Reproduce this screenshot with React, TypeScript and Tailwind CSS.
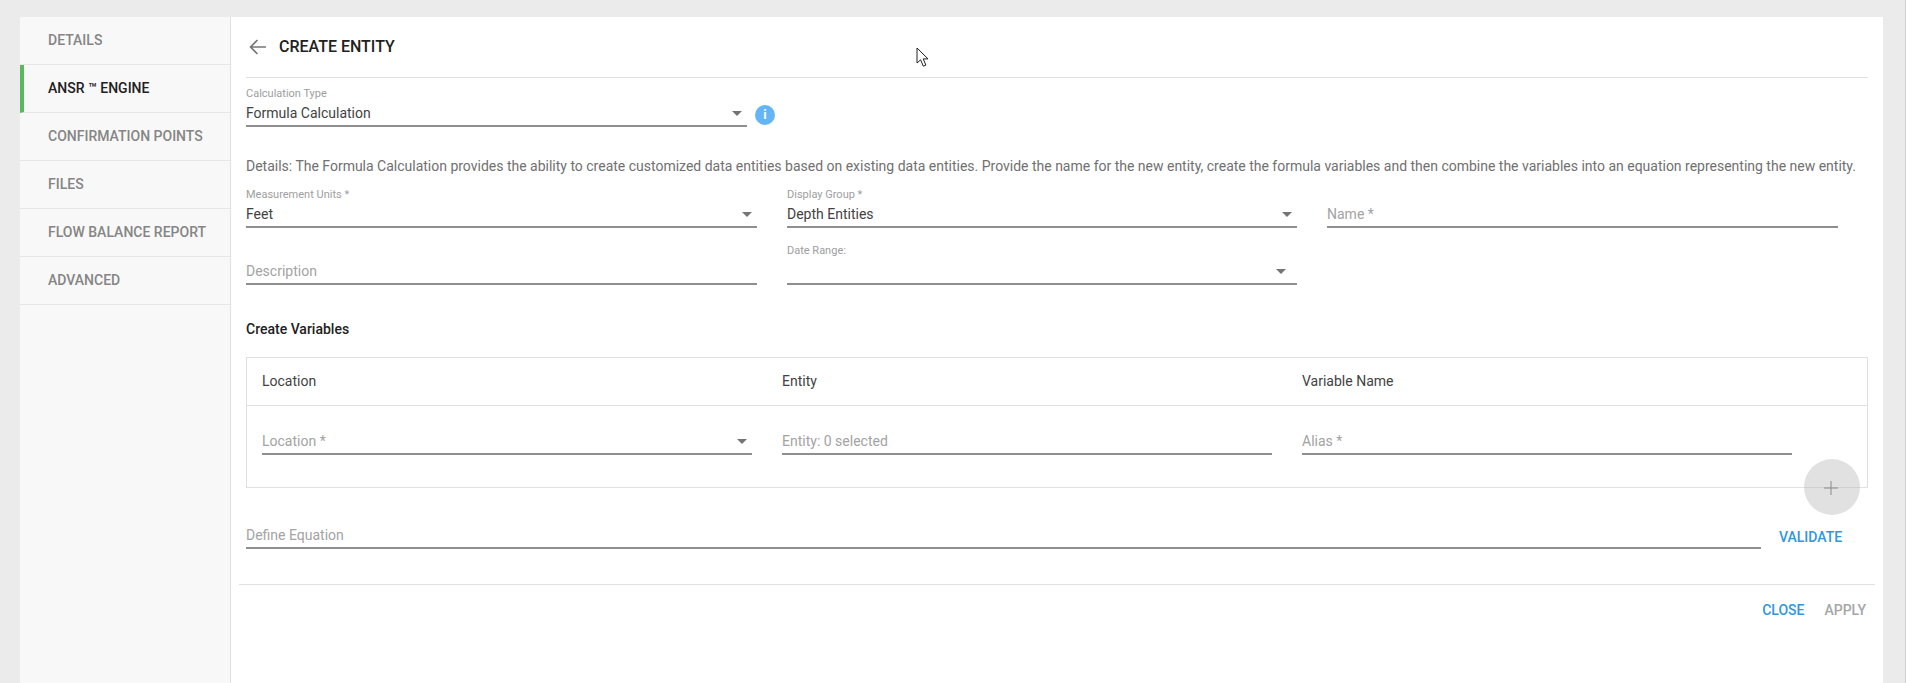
const navItems = ['DETAILS', 'ANSR ™ ENGINE', 'CONFIRMATION POINTS', 'FILES', 'FLOW BALANCE REPORT', 'ADVANCED'];

function Caret({ className }: { className?: string }) {
  return <span className={`h-0 w-0 border-x-[5px] border-t-[5px] border-x-transparent border-t-[#757575] ${className ?? 'mr-[5px]'}`} />;
}

// material style select / input with an underline
function Field({
  label,
  value,
  placeholder,
  select,
  className,
  labelClass,
  caretClass,
}: {
  label?: string;
  value?: string;
  placeholder?: string;
  select?: boolean;
  className?: string;
  labelClass?: string;
  caretClass?: string;
}) {
  return (
    <div className={className}>
      {label && <div className={`h-[14px] text-[11px] leading-[16px] text-[#9e9e9e] ${labelClass ?? ''}`}>{label}</div>}
      <div className={`flex items-center justify-between border-b-2 border-[#8f8f8f] ${label ? 'h-[27px] pt-[1px]' : 'h-[26px]'}`}>
        {value && <span className="text-[14px] text-[#424242]">{value}</span>}
        {placeholder && <span className="text-[14px] text-[#a3a3a3]">{placeholder}</span>}
        {!value && !placeholder && <span />}
        {select && <Caret className={caretClass} />}
      </div>
    </div>
  );
}

export default function App() {
  return (
    <div className="h-[683px] overflow-hidden border-r border-[#cfcfcf] bg-[#ebebeb] pt-[17px] pl-[20px] pr-[22px] font-['Roboto',sans-serif]">
      <div className="relative flex h-[666px] bg-white">
        {/* Sidebar */}
        <div className="w-[211px] shrink-0 border-r border-[#e0e0e0] bg-[#f8f8f8]">
          {navItems.map((item) => {
            const active = item.startsWith('ANSR');
            return (
              <div
                key={item}
                className={`flex h-[48px] items-center border-b border-[#e6e6e6] text-[14px] font-medium ${
                  active ? 'border-l-4 border-l-[#5cb85c] pl-[24px] text-[#212121]' : 'pl-[28px] text-[#858585]'
                }`}
              >
                {item}
              </div>
            );
          })}
        </div>

        {/* Main panel */}
        <div className="flex-1 px-[15px]">
          <div className="flex h-[61px] items-center gap-[12px] border-b border-[#e0e0e0] pl-[3px]">
            <svg width="18" height="18" viewBox="0 0 18 18" fill="none" stroke="#757575" strokeWidth="1.6">
              <path d="M17 9H1.5M8.5 2 1.5 9l7 7" />
            </svg>
            <span className="text-[16px] font-medium text-[#212121]">CREATE ENTITY</span>
          </div>

          <div className="mt-[8px] flex items-center">
            <Field label="Calculation Type" value="Formula Calculation" select className="w-[501px]" />
            <span className="mt-[16px] ml-[8px] flex h-[20px] w-[20px] items-center justify-center rounded-full bg-[#64b5f6] text-[13px] font-bold text-white">
              i
            </span>
          </div>

          <p className="mt-[29px] h-[20px] whitespace-nowrap text-[14px] leading-[20px] tracking-[-0.005px] text-[#707070]">
            Details: The Formula Calculation provides the ability to create customized data entities based on existing data entities. Provide the name for the new entity, create the formula variables and then combine the variables into an equation representing the new entity.
          </p>

          <div className="mt-[11px] flex items-end gap-[30px] pr-[30px]">
            <Field label="Measurement Units *" value="Feet" select className="w-[511px]" />
            <Field label="Display Group *" value="Depth Entities" select className="w-[510px]" />
            <Field placeholder="Name *" className="flex-1" />
          </div>

          <div className="mt-[15px] flex items-end gap-[30px]">
            <Field placeholder="Description" className="w-[511px]" />
            <Field label="Date Range:" labelClass="mb-[1px]" select caretClass="mr-[11px]" className="w-[510px]" />
          </div>

          <h3 className="mt-[34px] h-[20px] text-[14px] leading-[20px] font-medium text-[#212121]">Create Variables</h3>

          <div className="mt-[18px] border border-[#e0e0e0]">
            <div className="flex h-[48px] items-center gap-[30px] border-b border-[#e0e0e0] px-[15px] text-[14px] text-[#424242]">
              <span className="w-[490px]">Location</span>
              <span className="w-[490px]">Entity</span>
              <span>Variable Name</span>
            </div>
            <div className="flex h-[81px] gap-[30px] px-[15px] pt-[23px]">
              <Field placeholder="Location *" select className="w-[490px]" />
              <Field placeholder="Entity: 0 selected" className="w-[490px]" />
              <Field placeholder="Alias *" className="w-[490px]" />
            </div>
          </div>

          <div className="mt-[35px] flex items-center">
            <Field placeholder="Define Equation" className="w-[1515px]" />
            <button className="mt-[2px] ml-[18px] text-[14px] font-medium text-[#2f96e0]">VALIDATE</button>
          </div>

          <div className="-mx-[7px] mt-[35px] border-t border-[#e0e0e0]" />

          <div className="mt-[15px] flex justify-end gap-[20px] pr-[2px] text-[14px] font-medium">
            <button className="text-[#2f96e0]">CLOSE</button>
            <button className="text-[#a6a6a6]">APPLY</button>
          </div>
        </div>

        {/* Disabled add button, the table line shows through it */}
        <button className="absolute top-[442px] left-[1784px] flex h-[56px] w-[56px] items-center justify-center rounded-full bg-[#bdbdbd]/45">
          <svg className="mt-[2px] -ml-[3px]" width="14" height="14" viewBox="0 0 14 14" stroke="#8a8a8a" strokeWidth="1">
            <path d="M7 0v14M0 7h14" />
          </svg>
        </button>

        {/* Mouse pointer */}
        <svg className="absolute top-[30px] left-[896px]" width="14" height="21" viewBox="0 0 14 21" fill="white" stroke="#222" strokeWidth="1">
          <path d="M1 1v15l3.6-3.2 2.7 6.4 2.6-1.1-2.7-6.2H12z" />
        </svg>
      </div>
    </div>
  );
}
